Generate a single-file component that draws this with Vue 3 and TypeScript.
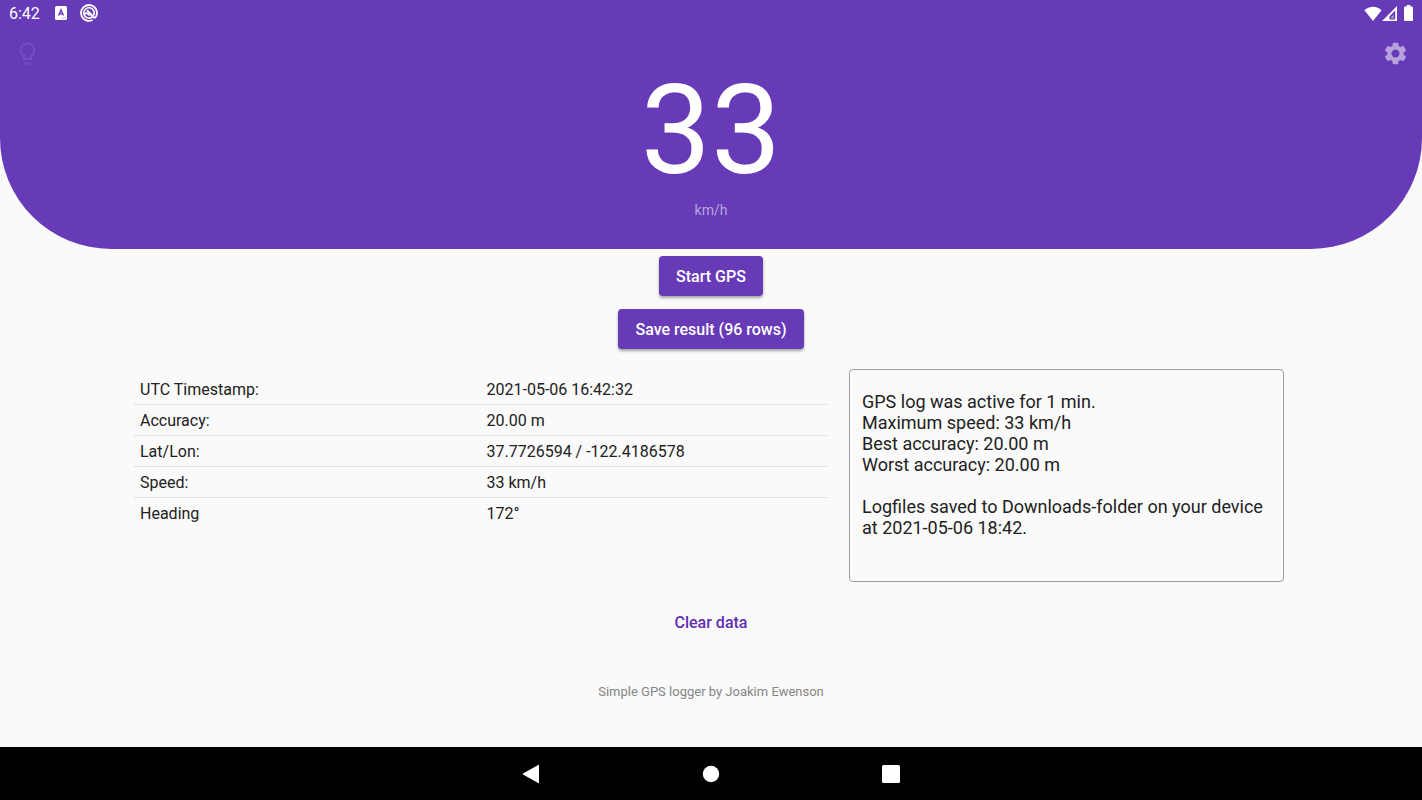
<script setup lang="ts">
interface Reading {
  label: string
  value: string
}

const clock = '6:42'
const speed = 33
const rowCount = 96

const readings: Reading[] = [
  { label: 'UTC Timestamp:', value: '2021-05-06 16:42:32' },
  { label: 'Accuracy:', value: '20.00 m' },
  { label: 'Lat/Lon:', value: '37.7726594 / -122.4186578' },
  { label: 'Speed:', value: '33 km/h' },
  { label: 'Heading', value: '172°' },
]

const stats: string[] = [
  'GPS log was active for 1 min.',
  'Maximum speed: 33 km/h',
  'Best accuracy: 20.00 m',
  'Worst accuracy: 20.00 m',
]
</script>

<template>
  <div class="screen">
    <header class="hero">
      <div class="status">
        <div class="status-left">
          <span class="clock">{{ clock }}</span>
          <svg class="badge" width="12" height="14" viewBox="0 0 12 14" aria-hidden="true">
            <rect width="12" height="14" rx="1.5" fill="#fff" />
            <path d="M3.6 9.6 6 3.8 8.4 9.6M4.4 7.8H7.6" fill="none" stroke="#673ab7" stroke-width="1.4" />
            <path d="M6.5 12H11" stroke="#b39ddb" stroke-width="0.8" />
          </svg>
          <svg width="18" height="18" viewBox="0 0 18 18" fill="none" stroke="#fff" aria-hidden="true">
            <path d="M15 14.100A7.900 7.900 0 1 0 12.600 16" stroke-width="1.800" />
            <path d="M12 13.200A5.200 5.200 0 1 1 13.600 11.400" stroke-width="1.700" />
            <path d="M7 6.300 14.600 14.200" stroke-width="2.200" />
            <path d="M4.800 9.800C6.200 8.600 8.200 9.200 9.600 11.600" stroke-width="1.700" />
          </svg>
        </div>
        <div class="status-right">
          <svg width="18" height="15" viewBox="0 0 18 15" aria-hidden="true">
            <path d="M9 15 .4 4.300C2.800 1.900 5.800.700 9 .700s6.200 1.200 8.600 3.600z" fill="#fff" />
          </svg>
          <svg class="signal" width="15" height="15" viewBox="0 0 15 15" aria-hidden="true">
            <path fill-rule="evenodd" d="M0 15 15 0V15zM7.500 13.500h5.700V4.600l-5.700 5.700z" fill="#fff" />
            <path d="M9.200 12.500V10.900L11.600 8.400V12.500z" fill="#b39ddb" />
          </svg>
          <svg class="battery" width="9" height="16" viewBox="0 0 9 16" aria-hidden="true">
            <path d="M2.600 0h3.800v1.500H8a1 1 0 0 1 1 1V15a1 1 0 0 1-1 1H1a1 1 0 0 1-1-1V2.500a1 1 0 0 1 1-1h1.600z" fill="#fff" />
          </svg>
        </div>
      </div>
      <div class="gauge">
        <button class="icon-button dim" type="button" aria-label="Keep screen on">
          <svg width="27" height="27" viewBox="0 0 24 24" fill="currentColor">
            <path d="M9 21c0 .5.4 1 1 1h4c.6 0 1-.5 1-1v-1H9v1zm3-19C8.100 2 5 5.100 5 9c0 2.400 1.200 4.500 3 5.700V17c0 .5.4 1 1 1h6c.6 0 1-.5 1-1v-2.300c1.800-1.300 3-3.400 3-5.700 0-3.900-3.100-7-7-7zm2.900 11.100-.9.600V16h-4v-2.300l-.9-.6C7.800 12.200 7 10.600 7 9c0-2.800 2.200-5 5-5s5 2.200 5 5c0 1.600-.8 3.200-2.100 4.100z" />
          </svg>
        </button>
        <div class="reading">
          <div class="speed">{{ speed }}</div>
          <div class="unit">km/h</div>
        </div>
        <button class="icon-button" type="button" aria-label="Settings">
          <svg width="27" height="27" viewBox="0 0 24 24" fill="currentColor">
            <path d="M19.140 12.940c.040-.3.060-.610.060-.940 0-.320-.020-.640-.070-.940l2.030-1.580c.180-.140.230-.410.120-.610l-1.920-3.320c-.120-.220-.370-.290-.590-.220l-2.390.960c-.5-.380-1.030-.7-1.620-.940l-.360-2.540c-.040-.240-.240-.410-.480-.410h-3.840c-.240 0-.430.170-.470.410l-.360 2.540c-.590.240-1.130.570-1.620.940l-2.390-.960c-.220-.080-.470 0-.590.220L2.740 8.870c-.120.210-.080.470.120.610l2.030 1.580c-.050.3-.090.630-.090.940s.020.640.070.940l-2.030 1.580c-.180.140-.230.410-.120.610l1.920 3.320c.120.220.370.290.590.220l2.390-.960c.5.380 1.030.7 1.620.940l.360 2.540c.050.240.240.410.480.410h3.840c.240 0 .440-.170.470-.410l.360-2.540c.590-.240 1.130-.560 1.620-.940l2.390.960c.220.080.470 0 .590-.220l1.920-3.320c.120-.220.070-.470-.120-.610l-2.010-1.580zM12 15.600c-1.980 0-3.600-1.620-3.600-3.600s1.620-3.600 3.600-3.600 3.600 1.620 3.600 3.600-1.620 3.600-3.600 3.600z" />
          </svg>
        </button>
      </div>
    </header>

    <main class="content">
      <div class="actions">
        <button class="primary" type="button">Start GPS</button>
        <button class="primary" type="button">Save result ({{ rowCount }} rows)</button>
      </div>

      <div class="details">
        <table class="readings">
          <tbody>
            <tr v-for="r in readings" :key="r.label">
              <th scope="row">{{ r.label }}</th>
              <td>{{ r.value }}</td>
            </tr>
          </tbody>
        </table>
        <section class="log" aria-label="Log summary">
          <p>
            <template v-for="s in stats" :key="s">{{ s }}<br /></template>
          </p>
          <p>Logfiles saved to Downloads-folder on your device at 2021-05-06 18:42.</p>
        </section>
      </div>

      <button class="text-button" type="button">Clear data</button>
      <footer class="credit">Simple GPS logger by Joakim Ewenson</footer>
    </main>

    <nav class="system-nav" aria-label="System navigation">
      <button type="button" aria-label="Back">
        <svg width="20" height="20" viewBox="0 0 20 20" fill="#fff">
          <path d="M18 1.300V18.700Q18 19.600 17.200 19.100L2 10.500Q1.300 10 2 9.500L17.200.900Q18 .400 18 1.300z" />
        </svg>
      </button>
      <button type="button" aria-label="Home">
        <svg width="20" height="20" viewBox="0 0 20 20" fill="#fff"><circle cx="10" cy="10" r="8.200" /></svg>
      </button>
      <button type="button" aria-label="Overview">
        <svg width="20" height="20" viewBox="0 0 20 20" fill="#fff"><rect x="1" y="1" width="18" height="18" rx="1.500" /></svg>
      </button>
    </nav>
  </div>
</template>

<style>
body {
  margin: 0;
  background: #fafafa;
}
</style>

<style scoped>
.screen {
  display: flex;
  flex-direction: column;
  min-height: 100vh;
  font-family: Roboto, 'Liberation Sans', sans-serif;
  font-size: 16px;
  color: #212121;
  background: #fafafa;
}

button {
  font: inherit;
  border: 0;
  padding: 0;
  background: none;
  cursor: pointer;
}

svg {
  display: block;
}

.hero {
  background: #673ab7;
  color: #fff;
  border-radius: 0 0 111px 111px;
  padding-bottom: 31px;
}

.status {
  display: flex;
  justify-content: space-between;
  height: 26px;
  padding: 0 9px;
}

.status-left,
.status-right {
  display: flex;
  align-items: center;
}

.status-left {
  gap: 13px;
}

.badge {
  margin-left: 2px;
}

.battery {
  margin-left: 7px;
}

.gauge {
  display: grid;
  grid-template-columns: 54px 1fr 54px;
  align-items: start;
}

.icon-button {
  display: grid;
  place-items: center;
  height: 54px;
  color: #b8a2dd;
}

.dim {
  color: #754cbf;
}

.reading {
  padding-top: 42px;
  text-align: center;
}

.speed {
  font-size: 125px;
  line-height: 125px;
}

.unit {
  margin-top: 9px;
  font-size: 14px;
  line-height: 16px;
  color: #bba6de;
}

.content {
  flex: 1;
  display: flex;
  flex-direction: column;
  align-items: center;
}

.actions {
  display: flex;
  flex-direction: column;
  align-items: center;
  gap: 13px;
  padding-top: 7px;
}

.primary {
  height: 40px;
  padding: 0 17px;
  border-radius: 4px;
  background: #673ab7;
  color: #fff;
  font-weight: 500;
  box-shadow: 0 2px 3px rgba(0, 0, 0, 0.35);
}

.details {
  align-self: stretch;
  display: grid;
  grid-template-columns: 693fr 435fr;
  align-items: start;
  gap: 22px;
  margin-top: 20px;
  padding: 0 138px 0 134px;
}

.readings {
  width: 100%;
  margin-top: 5px;
  table-layout: fixed;
  border-collapse: separate;
  border-spacing: 0;
}

.readings th,
.readings td {
  height: 30px;
  padding: 0 6px;
  border-bottom: 1px solid #e0e0e0;
  text-align: left;
  font-weight: 400;
}

.readings tr:last-child th,
.readings tr:last-child td {
  border-bottom: 0;
}

.log {
  box-sizing: border-box;
  min-height: 213px;
  padding: 21px 12px 20px;
  border: 1px solid #9e9e9e;
  border-radius: 4px;
  font-size: 18px;
  line-height: 21px;
}

.log p {
  margin: 0;
}

.log p + p {
  margin-top: 21px;
}

.text-button {
  margin-top: 20px;
  height: 40px;
  padding: 0 8px;
  font-weight: 500;
  color: #5e2fb3;
}

.credit {
  margin: 42px 0 20px;
  font-size: 13px;
  line-height: 16px;
  color: #858585;
}

.system-nav {
  display: flex;
  justify-content: center;
  align-items: center;
  gap: 160px;
  height: 53px;
  background: #000;
}
</style>
